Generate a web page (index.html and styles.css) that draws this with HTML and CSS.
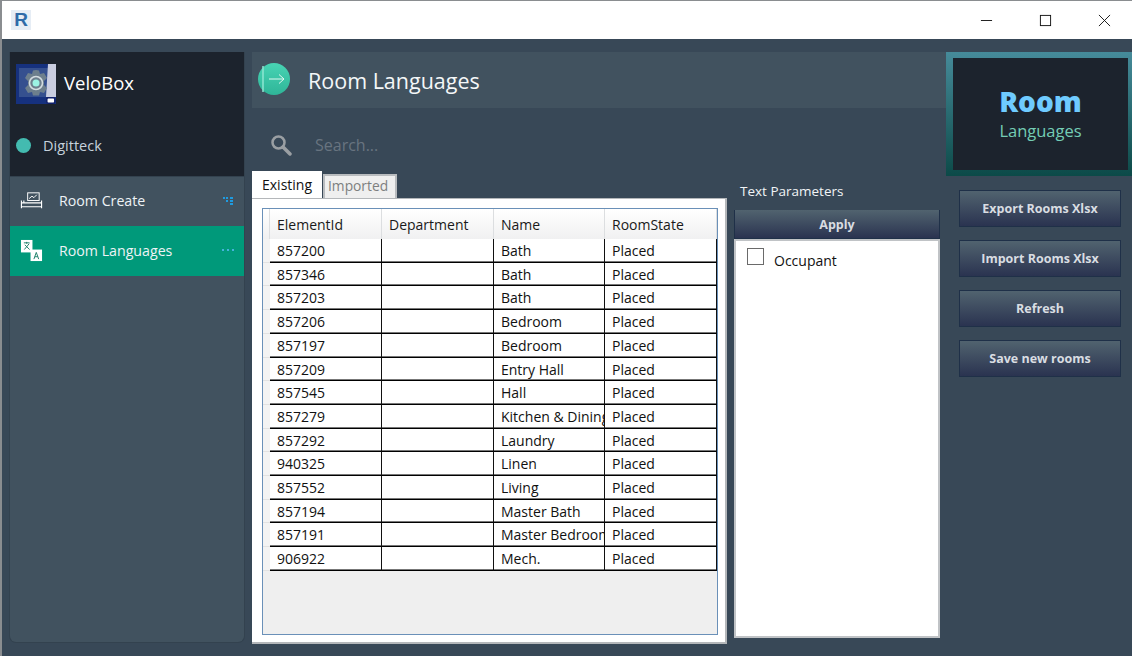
FILE: index.html
```html
<!DOCTYPE html>
<html lang="en">
<head>
<meta charset="utf-8">
<title>Room Languages</title>
<link rel="stylesheet" href="styles.css">
</head>
<body>
<div class="window">
  <header class="titlebar">
    <div class="app-icon"><span>R</span></div>
    <div class="win-controls">
      <svg class="win-btn" viewBox="0 0 14 14"><path d="M1 7h12" stroke="#111" fill="none"/></svg>
      <svg class="win-btn" viewBox="0 0 14 14"><rect x="1.5" y="1.5" width="11" height="11" stroke="#111" fill="none"/></svg>
      <svg class="win-btn" viewBox="0 0 14 14"><path d="M1 1l12 12M13 1L1 13" stroke="#111" fill="none"/></svg>
    </div>
  </header>
  <div class="workspace">
    <aside class="sidebar">
      <div class="brand">
        <div class="brand-row">
          <svg class="brand-logo" viewBox="0 0 40 40">
            <rect width="40" height="40" fill="#16317e"/>
            <rect x="3" y="4" width="30" height="29" fill="#35508f"/>
            <path d="M32 0h8v33H30z" fill="#c9cde0"/>
            <path d="M20 6l3 .5 1 3.500 4-1 3 5-3 3v4l3 3-3 5-4-1-1 3.500h-6l-1-3.500-4 1-3-5 3-3v-4l-3-3 3-5 4 1 1-3.500z" fill="#6d7f8d"/>
            <circle cx="20" cy="19" r="6.500" fill="#6d7f8d" stroke="#d3dce0" stroke-width="1.600"/>
            <circle cx="20" cy="19" r="3.500" fill="#9cf3e4"/>
            <rect x="30.800" y="33.800" width="8" height="5.400" rx="1.500" fill="#fff" stroke="#10206a" stroke-width="1.500"/>
          </svg>
          <span class="brand-name">VeloBox</span>
        </div>
        <div class="user-row">
          <span class="user-dot"></span>
          <span class="user-name">Digitteck</span>
        </div>
      </div>
      <nav class="nav">
        <div class="nav-item">
          <svg class="nav-icon" viewBox="0 0 24 18">
            <path d="M1.500 17v-8M22.500 17v-8M1.500 15.500h21M1.500 11.500h21M4 11.500V9" stroke="#fff" stroke-width="1.200" fill="none"/>
            <rect x="8" y="1" width="12" height="8" fill="none" stroke="#fff"/>
            <path d="M9.500 7l3-2.500 2 1.500 3-3" stroke="#fff" fill="none"/>
          </svg>
          <span class="nav-label">Room Create</span>
          <svg class="nav-mark" viewBox="0 0 12 12"><path d="M1 2h2v2H1zM4 2h2v2H4zM8 2h3v2H8zM4 5h2v2H4zM8 5h3v2H8zM8 8h3v2H8z" fill="#1f9be0"/></svg>
        </div>
        <div class="nav-item active">
          <svg class="nav-icon" viewBox="0 0 24 24">
            <rect x="1" y="1" width="12" height="13" fill="#fff"/>
            <path d="M4 4h6M7 3v2M4.500 11L9.500 5M5 6l5 5" stroke="#1d7f68" fill="none"/>
            <rect x="11" y="11" width="12" height="12" fill="#fff"/>
            <path d="M14.500 21l2.500-7 2.500 7M15.500 18.500h3" stroke="#1d7f68" fill="none"/>
          </svg>
          <span class="nav-label">Room Languages</span>
          <svg class="nav-mark" viewBox="0 0 12 12"><path d="M0 5h2v2H0zM5 5h2v2H5zM10 5h2v2h-2z" fill="#45b4dc"/></svg>
        </div>
      </nav>
    </aside>

    <main class="main">
      <div class="page-head">
        <svg class="head-icon" viewBox="0 0 32 32">
          <defs><linearGradient id="hg" x1="0" y1="0" x2="0" y2="1"><stop offset="0" stop-color="#48d4b4"/><stop offset="1" stop-color="#2fb598"/></linearGradient></defs>
          <circle cx="16" cy="16" r="16" fill="url(#hg)"/>
          <path d="M5 3v26" stroke="#8fe6d2" stroke-width="1.500"/>
          <path d="M11 16h15M21 11.500l5 4.500-5 4.500" stroke="#dff7f1" fill="none"/>
        </svg>
        <h1 class="page-title">Room Languages</h1>
      </div>
      <div class="search-row">
        <svg class="search-icon" viewBox="0 0 22 22">
          <circle cx="8.500" cy="8.500" r="6" fill="none" stroke="#9a9fa3" stroke-width="2.500"/>
          <path d="M13 13l7 7" stroke="#9a9fa3" stroke-width="3.500" stroke-linecap="round"/>
        </svg>
        <span class="search-text">Search...</span>
      </div>
      <div class="columns">
        <section class="data-col">
          <div class="tabs">
            <div class="tab current">Existing</div>
            <div class="tab">Imported</div>
          </div>
          <div class="tab-panel">
            <div class="grid-frame">
              <div class="grid-head">
                <div class="corner"></div>
                <div class="hcell">ElementId</div>
                <div class="hcell">Department</div>
                <div class="hcell">Name</div>
                <div class="hcell">RoomState</div>
              </div>
              <div class="grid-row"><div class="rowhead"></div><div class="cell">857200</div><div class="cell"></div><div class="cell">Bath</div><div class="cell">Placed</div></div>
              <div class="grid-row"><div class="rowhead"></div><div class="cell">857346</div><div class="cell"></div><div class="cell">Bath</div><div class="cell">Placed</div></div>
              <div class="grid-row"><div class="rowhead"></div><div class="cell">857203</div><div class="cell"></div><div class="cell">Bath</div><div class="cell">Placed</div></div>
              <div class="grid-row"><div class="rowhead"></div><div class="cell">857206</div><div class="cell"></div><div class="cell">Bedroom</div><div class="cell">Placed</div></div>
              <div class="grid-row"><div class="rowhead"></div><div class="cell">857197</div><div class="cell"></div><div class="cell">Bedroom</div><div class="cell">Placed</div></div>
              <div class="grid-row"><div class="rowhead"></div><div class="cell">857209</div><div class="cell"></div><div class="cell">Entry Hall</div><div class="cell">Placed</div></div>
              <div class="grid-row"><div class="rowhead"></div><div class="cell">857545</div><div class="cell"></div><div class="cell">Hall</div><div class="cell">Placed</div></div>
              <div class="grid-row"><div class="rowhead"></div><div class="cell">857279</div><div class="cell"></div><div class="cell">Kitchen &amp; Dining</div><div class="cell">Placed</div></div>
              <div class="grid-row"><div class="rowhead"></div><div class="cell">857292</div><div class="cell"></div><div class="cell">Laundry</div><div class="cell">Placed</div></div>
              <div class="grid-row"><div class="rowhead"></div><div class="cell">940325</div><div class="cell"></div><div class="cell">Linen</div><div class="cell">Placed</div></div>
              <div class="grid-row"><div class="rowhead"></div><div class="cell">857552</div><div class="cell"></div><div class="cell">Living</div><div class="cell">Placed</div></div>
              <div class="grid-row"><div class="rowhead"></div><div class="cell">857194</div><div class="cell"></div><div class="cell">Master Bath</div><div class="cell">Placed</div></div>
              <div class="grid-row"><div class="rowhead"></div><div class="cell">857191</div><div class="cell"></div><div class="cell">Master Bedroom</div><div class="cell">Placed</div></div>
              <div class="grid-row"><div class="rowhead"></div><div class="cell">906922</div><div class="cell"></div><div class="cell">Mech.</div><div class="cell">Placed</div></div>
            </div>
          </div>
        </section>
        <section class="param-col">
          <div class="param-label">Text Parameters</div>
          <button class="btn apply">Apply</button>
          <div class="param-list">
            <label class="param-item"><span class="check"></span><span>Occupant</span></label>
          </div>
        </section>
      </div>
    </main>

    <aside class="actions">
      <div class="summary">
        <div class="summary-inner">
          <div class="summary-title">Room</div>
          <div class="summary-sub">Languages</div>
        </div>
      </div>
      <div class="action-list">
        <button class="btn action">Export Rooms Xlsx</button>
        <button class="btn action">Import Rooms Xlsx</button>
        <button class="btn action">Refresh</button>
        <button class="btn action">Save new rooms</button>
      </div>
    </aside>
  </div>
</div>
</body>
</html>
```
FILE: styles.css
```css
* { box-sizing: border-box; }
html, body { margin: 0; padding: 0; height: 100%; overflow: hidden; }
body { font-family: "Open Sans", "Noto Sans", sans-serif; background: #384857; }

.window { width: 1132px; height: 656px; display: flex; flex-direction: column; border-left: 2px solid #8a8d90; border-top: 1px solid #8a8d90; background: #384857; overflow: hidden; }

.titlebar { height: 38px; flex: none; background: #fff; display: flex; align-items: center; justify-content: space-between; padding-left: 9px; }
.app-icon { width: 20px; height: 20px; background: #e6edf5; display: flex; align-items: center; justify-content: center; margin-top: -1px; }
.app-icon span { font: bold 19px "Liberation Sans", sans-serif; color: #2f6ba8; line-height: 20px; }
.win-controls { display: flex; height: 100%; align-items: center; padding-right: 21px; gap: 46px; }
.win-btn { width: 13px; height: 13px; display: block; }

.workspace { flex: 1; display: flex; padding-top: 13px; min-height: 0; }

.sidebar { width: 236px; height: 591px; margin-left: 7px; flex: none; background: #41525f; border: 1px solid #33424f; border-top: 0; border-radius: 0 0 7px 7px; display: flex; flex-direction: column; overflow: hidden; }
.brand { height: 124px; flex: none; background: #1c232d; padding: 12px 6px 0; }
.brand-row { display: flex; align-items: center; gap: 8px; }
.brand-logo { width: 40px; height: 40px; flex: none; }
.brand-name { font-size: 18.500px; color: #fff; margin-top: -4px; }
.user-row { display: flex; align-items: center; margin-top: 32px; gap: 12px; }
.user-dot { width: 15px; height: 15px; border-radius: 50%; background: #43bbb0; flex: none; }
.user-name { font-size: 14.500px; color: #c6d2dc; }

.nav { display: flex; flex-direction: column; }
.nav-item { height: 50px; display: flex; align-items: center; padding: 0 10px; color: #eef3f6; font-size: 14.200px; }
.nav-item:first-child { border-top: 1px solid #33424f; }
.nav-item.active { background: #00997a; }
.nav-icon { width: 23px; height: 23px; flex: none; margin-top: -2px; }
.nav-label { flex: 1; margin: -2px 0 0 16px; }
.nav-mark { width: 12px; height: 12px; flex: none; margin-top: -2px; }

.main { width: 694px; margin-left: 7px; flex: none; display: flex; flex-direction: column; }
.page-head { height: 56px; flex: none; background: #41525f; display: flex; align-items: center; padding-left: 6px; }
.head-icon { width: 32px; height: 32px; flex: none; margin-top: -2px; }
.page-title { margin: 0 0 0 18px; font-size: 21.500px; font-weight: 400; color: #f4f7f8; }
.search-row { height: 64px; flex: none; display: flex; align-items: center; padding: 10px 0 0 18px; }
.search-icon { width: 22px; height: 22px; flex: none; margin-top: -1px; }
.search-text { margin-left: 23px; font-size: 16px; color: #687480; }

.columns { display: flex; flex: 1; min-height: 0; }
.data-col { width: 475px; flex: none; }
.tabs { display: flex; height: 26px; align-items: flex-end; }
.tab { height: 24px; width: 74px; background: #efefef; border: 2px solid #b9bcbf; border-bottom: 0; color: #7d7f80; font-size: 13.800px; line-height: 19px; padding-left: 3px; margin-left: 1px; }
.tab.current { height: 27px; width: 70px; background: #fff; border: 0; color: #111; margin: 0; padding-left: 0; font-size: 14px; line-height: 28px; text-align: center; position: relative; z-index: 1; }
.tab-panel { width: 475px; height: 446px; background: #fff; border-right: 2px solid #b4b7ba; border-bottom: 2px solid #b4b7ba; border-top: 1px solid #b4b7ba; padding: 9px 8px 0 10px; }
.grid-frame { width: 456px; height: 427px; background: #efefef; border: 1px solid #6a90b8; }

.grid-head, .grid-row { display: grid; grid-template-columns: 7px 112px 112px 111px 112px; }
.grid-head { height: 30px; background: linear-gradient(#fff, #f0f0f1); }
.grid-row { height: 23.710px; }
.corner, .hcell { border-right: 1px solid #dcdee0; }
.hcell { font-size: 14px; color: #1a1a1a; line-height: 32px; padding-left: 7px; white-space: nowrap; overflow: hidden; }
.rowhead { background: #f3f3f3; border-bottom: 1px solid #e2e2e2; }
.cell { background: #fff; border-right: 1px solid #111; border-bottom: 1px solid #000; box-shadow: inset 0 -1px #777; font-size: 14px; color: #111; line-height: 23px; padding-left: 7px; white-space: nowrap; overflow: hidden; }

.param-col { width: 206px; margin-left: 7px; flex: none; display: flex; flex-direction: column; }
.param-label { height: 38px; padding: 8px 0 0 6px; font-size: 13.500px; line-height: 22px; color: #f1f4f6; }
.btn { font-family: inherit; font-weight: 700; font-size: 12.500px; color: #d9dde2; background: linear-gradient(#51636f, #2a3350); border: 1px solid #1f3048; padding: 0; display: block; }
.apply { width: 206px; height: 29px; flex: none; border-width: 0 1px 1px; }
.param-list { width: 206px; height: 399px; flex: none; background: #fff; border: 2px solid #c0c3c6; padding: 7px 0 0 11px; }
.param-item { display: flex; align-items: flex-start; gap: 10px; font-size: 14px; color: #111; line-height: 26px; }
.check { width: 17px; height: 17px; border: 1px solid #6a6a6a; flex: none; }

.actions { width: 186px; flex: none; }
.summary { height: 124px; padding: 6px 4px 6px 7px; background: linear-gradient(#468b9a, #0c4a48); }
.summary-inner { height: 100%; background: #1c232d; display: flex; flex-direction: column; align-items: center; justify-content: center; }
.summary-title { font-size: 28px; font-weight: 800; color: #6fcbff; line-height: 32px; }
.summary-sub { font-size: 16.500px; color: #74cdb5; line-height: 24px; margin-top: 2px; }
.action-list { display: flex; flex-direction: column; gap: 13px; padding: 14px 0 0 13px; }
.action { width: 162px; height: 37px; }
```
